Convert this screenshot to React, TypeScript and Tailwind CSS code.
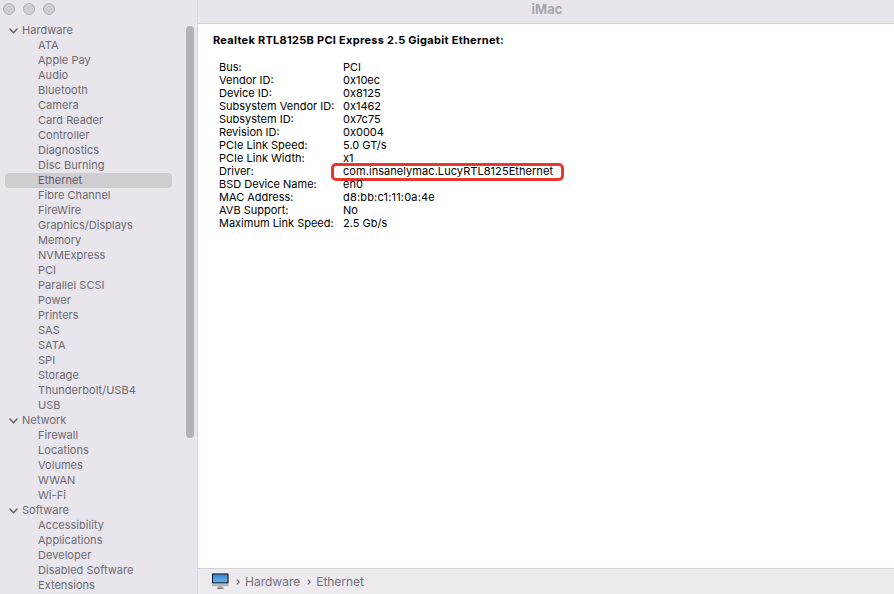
type Group = { name: string; items: string[] };

const groups: Group[] = [
  {
    name: "Hardware",
    items: [
      "ATA", "Apple Pay", "Audio", "Bluetooth", "Camera", "Card Reader", "Controller",
      "Diagnostics", "Disc Burning", "Ethernet", "Fibre Channel", "FireWire",
      "Graphics/Displays", "Memory", "NVMExpress", "PCI", "Parallel SCSI", "Power",
      "Printers", "SAS", "SATA", "SPI", "Storage", "Thunderbolt/USB4", "USB",
    ],
  },
  { name: "Network", items: ["Firewall", "Locations", "Volumes", "WWAN", "Wi-Fi"] },
  {
    name: "Software",
    items: ["Accessibility", "Applications", "Developer", "Disabled Software", "Extensions"],
  },
];

const details: [string, string, string?][] = [
  ["Bus:", "PCI"],
  ["Vendor ID:", "0x10ec"],
  ["Device ID:", "0x8125"],
  ["Subsystem Vendor ID:", "0x1462"],
  ["Subsystem ID:", "0x7c75"],
  ["Revision ID:", "0x0004"],
  ["PCIe Link Speed:", "5.0 GT/s"],
  ["PCIe Link Width:", "x1"],
  ["Driver:", "com.insanelymac.LucyRTL8125Ethernet", "tracking-[0.06px]"],
  ["BSD Device Name:", "en0"],
  ["MAC Address:", "d8:bb:c1:11:0a:4e", "tracking-[0.18px]"],
  ["AVB Support:", "No"],
  ["Maximum Link Speed:", "2.5 Gb/s"],
];

function Sidebar() {
  return (
    <aside className="flex h-full w-[198px] shrink-0 flex-col border-r border-[#dbd8df] bg-[#e8e5ec]">
      <div className="flex h-[23px] shrink-0 gap-2 pl-[3px] pt-[3px]">
        {[0, 1, 2].map((i) => (
          <span key={i} className="size-3 rounded-full border border-[#b3b0b6] bg-[#cfccd3]" />
        ))}
      </div>
      <div className="flex min-h-0 flex-1">
        <nav className="w-[172px] shrink-0 overflow-hidden pl-[5px] text-[11px] leading-[15px] tracking-[0.03px] text-[#6d6a71]">
          {groups.map((group) => (
            <div key={group.name}>
              <div className="flex h-[15px] items-center">
                <svg className="ml-[4px] mr-[4px] mt-[1px] h-[6px] w-[9px]" viewBox="0 0 9 6" fill="none">
                  <path d="M1 1L4.5 4.8L8 1" stroke="#67646b" strokeWidth="1.6" strokeLinecap="round" strokeLinejoin="round" />
                </svg>
                {group.name}
              </div>
              {group.items.map((item) => (
                <div
                  key={item}
                  className={
                    item === "Ethernet"
                      ? "h-[15px] whitespace-nowrap rounded-[4px] bg-[#cfccd2] pl-[33px] text-[#5f5c63]"
                      : "h-[15px] whitespace-nowrap pl-[33px]"
                  }
                >
                  {item}
                </div>
              ))}
            </div>
          ))}
        </nav>
        <div className="ml-[14px] mt-[3px] h-[412px] w-2 rounded-full bg-[#b3b1b7]" />
      </div>
    </aside>
  );
}

function MonitorIcon() {
  return (
    <svg className="h-[17px] w-[17px]" viewBox="0 0 17 17">
      <defs>
        <linearGradient id="screen" x1="0" y1="0" x2="0" y2="1">
          <stop offset="0" stopColor="#3c86cb" />
          <stop offset="1" stopColor="#67b3ee" />
        </linearGradient>
      </defs>
      <rect x="0" y="0.5" width="16.5" height="12.8" rx="0.5" fill="#b9b9bc" />
      <rect x="0" y="0.5" width="16.5" height="9.8" rx="0.5" fill="#10151b" />
      <rect x="1" y="1.5" width="14.5" height="7.8" fill="url(#screen)" />
      <path d="M6 13.3h4.5l.4 1.7H5.6z" fill="#a5a5a8" />
      <rect x="5" y="15" width="6.5" height="1" fill="#77777b" />
    </svg>
  );
}

function Separator() {
  return (
    <svg className="h-[6px] w-[4px]" viewBox="0 0 4 6" fill="none">
      <path d="M0.8 0.6L3.2 3L0.8 5.4" stroke="#67656b" strokeWidth="1.2" />
    </svg>
  );
}

export default function App() {
  return (
    <div className="flex h-[594px] w-[894px] overflow-hidden bg-white font-['Inter',sans-serif]">
      <Sidebar />
      <main className="flex min-w-0 flex-1 flex-col">
        <header className="h-6 shrink-0 border-b border-[#d5d2d8] bg-[#e8e5ec] pl-[2px] text-center text-[13px] font-bold leading-[18px] text-[#a9a6ad]">
          iMac
        </header>
        <section className="flex-1 pl-[15px] pt-[10px] text-[11px] leading-[13px] text-black">
          <h1 className="whitespace-nowrap font-bold tracking-[0.28px]">
            Realtek RTL8125B PCI Express 2.5 Gigabit Ethernet:
          </h1>
          <dl className="mt-[14px] pl-[6px]">
            {details.map(([label, value, tracking]) => (
              <div key={label} className="flex h-[13px] whitespace-nowrap">
                <dt className="w-[124px] shrink-0">{label}</dt>
                <dd className={tracking ? `relative ${tracking}` : "relative"}>
                  {value}
                  {label === "Driver:" && (
                    <span className="absolute -left-[12px] -top-[2px] h-[18px] w-[233px] rounded-[5px] border-3 border-[#e5392f]" />
                  )}
                </dd>
              </div>
            ))}
          </dl>
        </section>
        <footer className="flex h-[26px] shrink-0 items-center border-t border-[#d5d2d8] bg-[#edeaf0] pl-[14px] text-[12px] text-[#75727a]">
          <MonitorIcon />
          <span className="ml-[7px] flex items-center gap-[5px]">
            <Separator />
            Hardware
          </span>
          <span className="ml-[7px] flex items-center gap-[5px] tracking-[-0.03px]">
            <Separator />
            Ethernet
          </span>
        </footer>
      </main>
    </div>
  );
}
